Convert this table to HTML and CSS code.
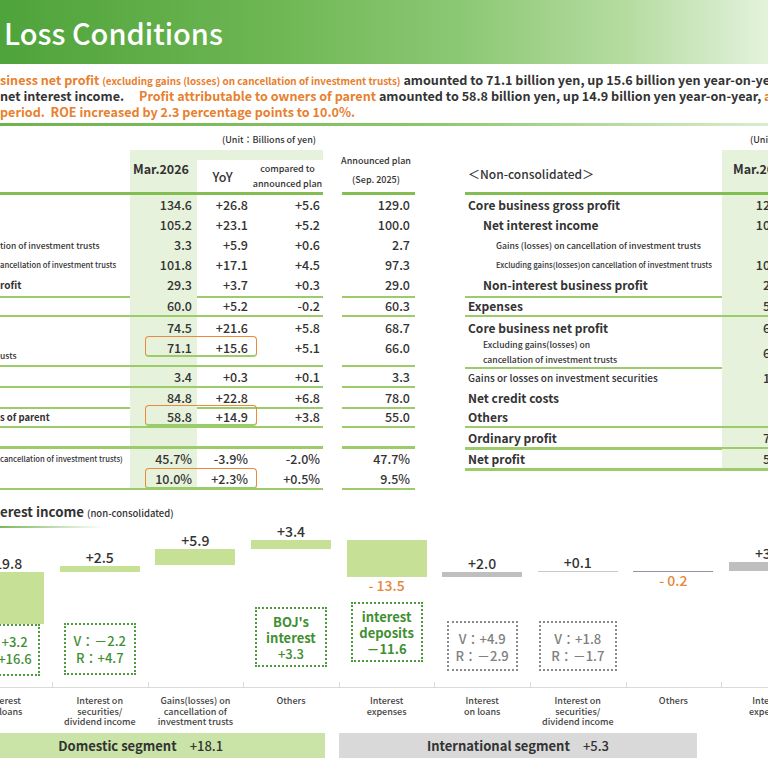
FILE: index.html
```html
<!DOCTYPE html>
<html lang="en">

<head>
  <meta charset="UTF-8">
  <meta name="viewport" content="width=device-width, initial-scale=1.0">
  <title>Profit and Loss Conditions</title>
  <link rel="stylesheet" href="styles.css">
</head>

<body>
  <div class="slide">
    <header class="title-bar">
      <h1>Loss Conditions</h1>
    </header>

    <div class="summary">
      <p class="line"><span class="hl">siness net profit</span> <span class="hl note">(excluding gains (losses) on cancellation of investment trusts)</span> amounted to 71.1 billion yen, up 15.6 billion yen year-on-year</p>
      <p class="line"> net interest income.<span class="gap"></span><span class="hl">Profit attributable to owners of parent</span> amounted to 58.8 billion yen, up 14.9 billion yen year-on-year, <span class="hl">a</span></p>
      <p class="line hl"> period.&nbsp; ROE increased by 2.3 percentage points to 10.0%.</p>
    </div>
    <div class="rule"></div>

    <section class="tables">
      <!-- consolidated -->
      <div class="tbl tbl-left">
        <div class="row unit-row">
          <div class="unit">(Unit：Billions of yen)</div>
        </div>
        <div class="row head">
          <div class="lbl"></div>
          <div class="c-mar">Mar.2026</div>
          <div class="c-yoy strip">YoY</div>
          <div class="c-cmp strip small">compared to<br>announced plan</div>
          <div class="gap-col"></div>
          <div class="c-plan small">Announced plan<br>(Sep. 2025)</div>
        </div>

        <div class="row r1">
          <div class="lbl"></div>
          <div class="c-mar">134.6</div><div class="c-yoy">+26.8</div><div class="c-cmp">+5.6</div>
          <div class="gap-col"></div><div class="c-plan">129.0</div>
        </div>
        <div class="row r1">
          <div class="lbl"></div>
          <div class="c-mar">105.2</div><div class="c-yoy">+23.1</div><div class="c-cmp">+5.2</div>
          <div class="gap-col"></div><div class="c-plan">100.0</div>
        </div>
        <div class="row r1">
          <div class="lbl lbl-s">tion of investment trusts</div>
          <div class="c-mar">3.3</div><div class="c-yoy">+5.9</div><div class="c-cmp">+0.6</div>
          <div class="gap-col"></div><div class="c-plan">2.7</div>
        </div>
        <div class="row r1">
          <div class="lbl lbl-xs">ancellation of investment trusts</div>
          <div class="c-mar">101.8</div><div class="c-yoy">+17.1</div><div class="c-cmp">+4.5</div>
          <div class="gap-col"></div><div class="c-plan">97.3</div>
        </div>
        <div class="row r1 ln">
          <div class="lbl lbl-p">rofit</div>
          <div class="c-mar">29.3</div><div class="c-yoy">+3.7</div><div class="c-cmp">+0.3</div>
          <div class="gap-col"></div><div class="c-plan">29.0</div>
        </div>
        <div class="row r6 ln">
          <div class="lbl"></div>
          <div class="c-mar">60.0</div><div class="c-yoy">+5.2</div><div class="c-cmp">-0.2</div>
          <div class="gap-col"></div><div class="c-plan">60.3</div>
        </div>
        <div class="row r7">
          <div class="lbl"></div>
          <div class="c-mar">74.5</div><div class="c-yoy">+21.6</div><div class="c-cmp">+5.8</div>
          <div class="gap-col"></div><div class="c-plan">68.7</div>
        </div>
        <div class="row r8 ln">
          <div class="lbl lbl-t lbl-low">usts</div>
          <div class="c-mar">71.1</div><div class="c-yoy">+15.6</div><div class="c-cmp">+5.1</div>
          <div class="gap-col"></div><div class="c-plan">66.0</div>
          <div class="mark"></div>
        </div>
        <div class="row r9 ln">
          <div class="lbl"></div>
          <div class="c-mar">3.4</div><div class="c-yoy">+0.3</div><div class="c-cmp">+0.1</div>
          <div class="gap-col"></div><div class="c-plan">3.3</div>
        </div>
        <div class="row r10 ln">
          <div class="lbl"></div>
          <div class="c-mar">84.8</div><div class="c-yoy">+22.8</div><div class="c-cmp">+6.8</div>
          <div class="gap-col"></div><div class="c-plan">78.0</div>
        </div>
        <div class="row r11 ln">
          <div class="lbl lbl-m">s of parent</div>
          <div class="c-mar">58.8</div><div class="c-yoy">+14.9</div><div class="c-cmp">+3.8</div>
          <div class="gap-col"></div><div class="c-plan">55.0</div>
          <div class="mark"></div>
        </div>
        <div class="row r12 ln-thick">
          <div class="lbl"></div>
          <div class="c-mar"></div><div class="c-yoy"></div><div class="c-cmp"></div>
          <div class="gap-col"></div><div class="c-plan"></div>
        </div>
        <div class="row r13">
          <div class="lbl lbl-xs">cancellation of investment trusts)</div>
          <div class="c-mar">45.7%</div><div class="c-yoy">-3.9%</div><div class="c-cmp">-2.0%</div>
          <div class="gap-col"></div><div class="c-plan">47.7%</div>
        </div>
        <div class="row r14 ln">
          <div class="lbl"></div>
          <div class="c-mar">10.0%</div><div class="c-yoy">+2.3%</div><div class="c-cmp">+0.5%</div>
          <div class="gap-col"></div><div class="c-plan">9.5%</div>
          <div class="mark"></div>
        </div>
      </div>

      <!-- non-consolidated -->
      <div class="tbl tbl-right">
        <div class="row unit-row">
          <div></div>
          <div class="unit">(Unit：Billions of yen)</div>
        </div>
        <div class="row head">
          <div class="lbl name">＜Non-consolidated＞</div>
          <div class="c-mar">Mar.2026</div>
        </div>

        <div class="row r1"><div class="lbl b">Core business gross profit</div><div class="c-mar">126.9</div></div>
        <div class="row r1"><div class="lbl b ind1">Net interest income</div><div class="c-mar">104.6</div></div>
        <div class="row r1"><div class="lbl tiny ind2">Gains (losses) on cancellation of investment trusts</div><div class="c-mar">3.3</div></div>
        <div class="row r1"><div class="lbl tinier ind2">Excluding gains(losses)on cancellation of investment trusts</div><div class="c-mar">101.3</div></div>
        <div class="row r1 ln"><div class="lbl b ind1">Non-interest business profit</div><div class="c-mar">22.3</div></div>
        <div class="row r6 ln"><div class="lbl b">Expenses</div><div class="c-mar">57.4</div></div>
        <div class="row r7"><div class="lbl b">Core business net profit</div><div class="c-mar">69.5</div></div>
        <div class="row r8 ln"><div class="lbl tiny2 ind1 two">Excluding gains(losses) on<br>cancellation of investment trusts</div><div class="c-mar">66.2</div></div>
        <div class="row r9"><div class="lbl mid">Gains or losses on investment securities</div><div class="c-mar">13.4</div></div>
        <div class="row r10"><div class="lbl b">Net credit costs</div><div class="c-mar">3.9</div></div>
        <div class="row r11 ln"><div class="lbl b">Others</div><div class="c-mar">0.6</div></div>
        <div class="row r12 ln-thick"><div class="lbl b">Ordinary profit</div><div class="c-mar">79.1</div></div>
        <div class="row r13 ln"><div class="lbl b">Net profit</div><div class="c-mar">56.9</div></div>
      </div>
    </section>

    <section class="chart">
      <h2 class="chart-title">erest income <span class="sub">(non-consolidated)</span></h2>

      <div class="plot">
        <div class="cat">
          <div class="val" style="margin-top:35px">+19.8</div>
          <div class="bar green" style="height:52px"></div>
          <div class="box box-green" style="margin-top:0">V：+3.2<br>R：+16.6</div>
        </div>
        <div class="cat">
          <div class="val" style="margin-top:29px">+2.5</div>
          <div class="bar green" style="height:6px"></div>
          <div class="box box-green" style="margin-top:51px">V：－2.2<br>R：+4.7</div>
        </div>
        <div class="cat">
          <div class="val" style="margin-top:12px">+5.9</div>
          <div class="bar green" style="height:16px"></div>
        </div>
        <div class="cat">
          <div class="val" style="margin-top:3px">+3.4</div>
          <div class="bar green" style="height:9px"></div>
          <div class="box box-green note-box" style="margin-top:58px">BOJ's<br>interest<br><span class="reg">+3.3</span></div>
        </div>
        <div class="cat">
          <div class="bar green" style="margin-top:20px;height:37px"></div>
          <div class="val neg">- 13.5</div>
          <div class="box box-green note-box" style="margin-top:8px">interest<br>deposits<br>－11.6</div>
        </div>
        <div class="cat">
          <div class="val" style="margin-top:35px">+2.0</div>
          <div class="bar gray" style="height:5px"></div>
          <div class="box box-gray" style="margin-top:44px">V：+4.9<br>R：－2.9</div>
        </div>
        <div class="cat">
          <div class="val" style="margin-top:34px">+0.1</div>
          <div class="bar gray thin" style="height:1px"></div>
          <div class="box box-gray wide" style="margin-top:49px">V：+1.8<br>R：－1.7</div>
        </div>
        <div class="cat">
          <div class="bar slate" style="margin-top:51px;height:1px"></div>
          <div class="val neg">- 0.2</div>
        </div>
        <div class="cat">
          <div class="val" style="margin-top:25px">+3.7</div>
          <div class="bar gray" style="height:9px"></div>
        </div>
      </div>

      <div class="axis">
        <div></div><div></div><div></div><div></div><div></div><div></div><div></div><div></div><div></div>
      </div>

      <div class="cats">
        <div>Interest<br>on loans</div>
        <div>Interest on<br>securities/<br>dividend income</div>
        <div>Gains(losses) on<br>cancellation of<br>investment trusts</div>
        <div>Others</div>
        <div>Interest<br>expenses</div>
        <div>Interest<br>on loans</div>
        <div>Interest on<br>securities/<br>dividend income</div>
        <div>Others</div>
        <div>Interest<br>expenses</div>
      </div>

      <div class="segments">
        <div class="seg seg-dom"><b>Domestic segment</b>　+18.1</div>
        <div class="seg seg-int"><b>International segment</b>　+5.3</div>
      </div>
    </section>
  </div>
</body>

</html>
```

FILE: styles.css
```css
body {
  margin: 0;
  font-family: "Noto Sans CJK JP", "Noto Sans", sans-serif;
  color: #333;
  background-color: #fff;
}

.slide {
  width: 768px;
  height: 768px;
  overflow: hidden;
}

/* title */
.title-bar {
  height: 64px;
  background: linear-gradient(90deg, #4fa33b 0%, #6db653 35%, #8cc874 60%, #b6dca2 82%, #e4f2dc 100%);
}

.title-bar h1 {
  margin: 0;
  padding: 14px 0 0 4px;
  font-size: 29px;
  line-height: 36px;
  font-weight: 500;
  color: #fff;
  white-space: nowrap;
}

/* summary */
.summary {
  padding-top: 8px;
  font-size: 12.6px;
  font-weight: 700;
  white-space: nowrap;
}

.summary .line {
  margin: 0;
  height: 16px;
  line-height: 16px;
}

.hl {
  color: #e8802e;
}

.summary .note {
  font-size: 9.9px;
}

.summary .gap {
  display: inline-block;
  width: 15px;
}

.rule {
  margin-top: 3px;
  height: 3px;
  background: linear-gradient(90deg, #6fb34e 0%, #8cc66c 55%, #d8edcc 100%);
}

/* tables */
.tables {
  display: flex;
  gap: 50px;
  height: 364px;
}

.tbl {
  flex: none;
  font-size: 12.5px;
}

.tbl-left {
  width: 415px;
}

.tbl-right {
  width: 325px;
}

.row {
  display: grid;
  position: relative;
  box-sizing: border-box;
  grid-template-columns: 130px 67px 58px 68px 19px 73px;
}

.tbl-right .row {
  grid-template-columns: 257px 68px;
}

.row > div {
  display: flex;
  align-items: center;
  justify-content: flex-end;
  box-sizing: border-box;
  white-space: nowrap;
}

.unit-row {
  height: 24px;
}

.unit-row .unit {
  grid-column: 2 / 5;
  font-size: 9px;
  font-weight: 500;
  padding-right: 7px;
  padding-top: 2px;
}

.tbl-right .unit-row .unit {
  grid-column: 2;
  justify-content: flex-start;
  padding-left: 28px;
}

.head {
  height: 45px;
}

.head > div {
  border-bottom: 3px solid #84be52;
  text-align: center;
  justify-content: center;
}

.head > .gap-col {
  border-bottom: none;
}

.head .c-mar {
  font-weight: 700;
  padding-bottom: 6px;
}

.head .strip {
  border-top: 10px solid #e7f2dc;
  padding-top: 0;
}

.head .small {
  font-size: 9px;
  line-height: 15px;
  font-weight: 500;
}

.head .c-plan {
  line-height: 19px;
  padding-bottom: 2px;
}

.head .name {
  justify-content: flex-start;
  padding-left: 3px;
  padding-top: 4px;
  font-weight: 500;
}

.tbl-right .head .c-mar {
  justify-content: flex-start;
  padding-left: 11px;
}

.c-mar {
  background-color: #e7f2dc;
}

.c-mar {
  padding-right: 5px;
}

.c-yoy {
  padding-right: 7px;
}

.c-cmp {
  padding-right: 3px;
}

.c-plan {
  padding-right: 5px;
}

.tbl-right .c-mar {
  padding-right: 2px;
}

.row .c-mar,
.row .c-yoy,
.row .c-cmp,
.row .c-plan {
  font-weight: 500;
}

.row.head .c-mar {
  font-weight: 700;
}

/* row heights */
.r1 { height: 20px; }
.r1.ln { height: 21px; }
.r6 { height: 21px; }
.r7 { height: 20px; }
.r8 { height: 30px; }
.r9 { height: 21px; }
.r10 { height: 19px; }
.r11 { height: 21px; }
.r12 { height: 21px; }
.r13 { height: 19px; }
.r14 { height: 22px; }

.r1 > div { padding-bottom: 2px; }

.r8 > div {
  align-items: flex-start;
  padding-top: 1px;
}

.ln > div {
  border-bottom: 2px solid #9ccc6a;
}

.ln-thick > div {
  border-bottom: 3px solid #9ccc6a;
}

.ln > .gap-col,
.ln-thick > .gap-col {
  border-bottom: none;
}

.tbl-right .r13.ln > div {
  border-bottom-width: 3px;
}

.lbl {
  justify-content: flex-start !important;
  font-weight: 700;
  font-size: 12px;
}

.lbl-s {
  font-size: 8.5px;
  font-weight: 500;
}

.lbl-t {
  font-size: 8.5px;
  font-weight: 500;
}

.lbl-xs {
  font-size: 7.7px;
  font-weight: 500;
}

.lbl-m {
  font-size: 9.5px;
}

.lbl-p {
  font-size: 10px;
}

.r8 .lbl-low {
  align-items: flex-end;
  padding-bottom: 4px;
}

.tbl-right .lbl {
  padding-left: 3px;
  font-size: 12px;
}

.tbl-right .lbl.ind1 {
  padding-left: 18px;
}

.tbl-right .lbl.ind2 {
  padding-left: 31px;
}

.tbl-right .lbl.tiny {
  font-size: 8.6px;
  font-weight: 500;
}

.tbl-right .lbl.tiny2 {
  font-size: 8.6px;
  font-weight: 500;
}

.tbl-right .lbl.tinier {
  font-size: 7.7px;
  font-weight: 500;
}

.tbl-right .lbl.mid {
  font-size: 10px;
  font-weight: 500;
}

.tbl-right .r8 .lbl.two {
  line-height: 15px;
  padding-top: 0;
}

.tbl-right .r8 .c-mar {
  align-items: center;
}

/* orange highlight frame */
.mark {
  position: absolute;
  left: 145px;
  width: 112px;
  top: 0;
  height: 21px;
  border: 1.5px solid #ea8a3c;
  border-radius: 4px;
}

.r8 .mark {
  top: -1px;
}

.r11 .mark {
  top: -2px;
}

/* chart */
.chart-title {
  position: relative;
  margin: 0;
  padding-top: 14px;
  height: 16px;
  line-height: 16px;
  font-size: 13.3px;
  font-weight: 700;
  white-space: nowrap;
}

.chart-title .sub {
  font-size: 9.5px;
  font-weight: 500;
}

.chart-title::after {
  content: "";
  position: absolute;
  left: 0;
  bottom: -8px;
  width: 105px;
  height: 2px;
  background: linear-gradient(90deg, #79b95a, rgba(121, 185, 90, 0));
}

.plot,
.axis,
.cats {
  display: grid;
  grid-template-columns: repeat(9, 95.6px);
  margin-left: -43.6px;
}

.plot {
  height: 162px;
}

.cat {
  display: flex;
  flex-direction: column;
  align-items: center;
}

.val {
  height: 16px;
  line-height: 16px;
  font-size: 14px;
  font-weight: 500;
  margin-bottom: 1px;
}

.val.neg {
  color: #e8863a;
  margin-top: 0;
}

.bar {
  width: 80px;
}

.bar.green {
  background-color: #c6e195;
}

.bar.gray {
  background-color: #bfbfbf;
}

.bar.thin {
  background-color: #c8c8c8;
}

.bar.slate {
  background-color: #8d97a8;
}

.box {
  box-sizing: border-box;
  width: 72px;
  padding: 8px 0;
  border: 2px dotted;
  font-size: 13px;
  line-height: 16.5px;
  text-align: center;
  font-weight: 500;
}

.box-green {
  border-color: #4d9b3c;
  color: #3f8f33;
  height: 52px;
}

.box-green.note-box {
  height: 60px;
  padding: 5px 0;
  line-height: 16px;
  font-weight: 700;
}

.box-green .reg {
  font-weight: 500;
}

.box-gray {
  border-color: #8a8a8a;
  color: #808080;
  height: 50px;
  width: 71px;
}

.box-gray.wide {
  width: 78px;
}

.axis > div {
  height: 5px;
  border-bottom: 1px solid #dadada;
  border-left: 1px solid #dadada;
}

.axis > div:first-child {
  border-left: none;
}

.cats {
  height: 45px;
  padding-top: 8px;
  box-sizing: border-box;
}

.cats > div {
  font-size: 9px;
  line-height: 10.5px;
  text-align: center;
  color: #444;
  font-weight: 500;
}

.segments {
  display: flex;
  gap: 14px;
  margin-left: -43.6px;
}

.seg {
  height: 25px;
  line-height: 25px;
  text-align: center;
  font-size: 13px;
  font-weight: 500;
  color: #333;
  white-space: nowrap;
}

.seg-dom {
  width: 368.6px;
  background-color: #c9e4a6;
}

.seg-int {
  width: 358px;
  background-color: #d9d9d9;
}
```
